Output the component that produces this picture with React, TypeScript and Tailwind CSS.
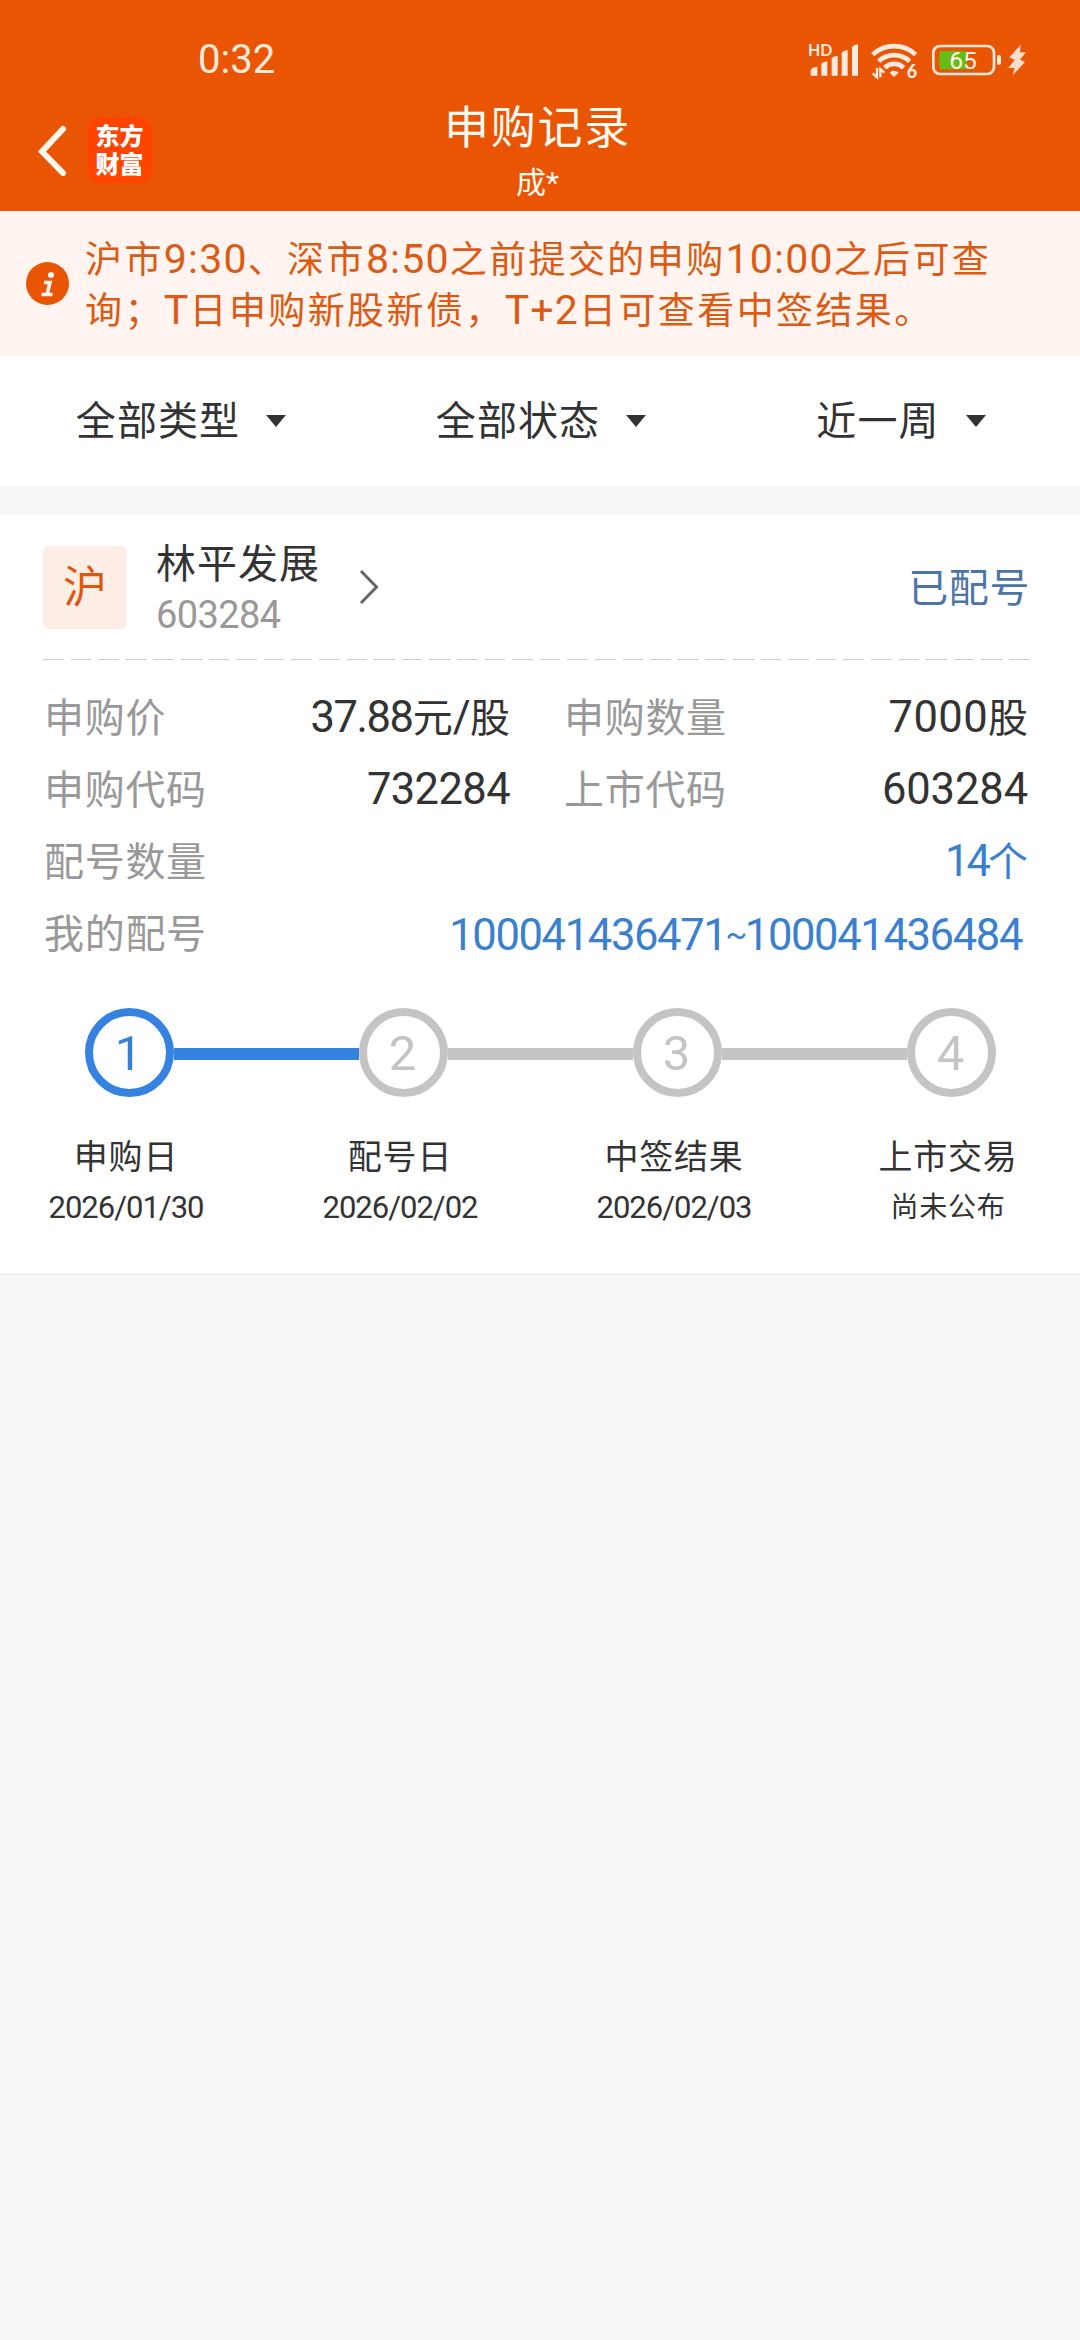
import type { ReactNode } from "react";

const cjk = "font-['Roboto','Noto_Sans_CJK_SC',sans-serif]";

function SignalIcon() {
  return (
    <svg width="52" height="36" viewBox="0 0 156 108" fill="#ffeadf" className="overflow-visible">
      <text x="0" y="42" fontFamily="Lato, sans-serif" fontWeight="700" fontSize="51" textLength="73" lengthAdjust="spacingAndGlyphs">HD</text>
      <path d="M8 84 L14 77 L28 74 V101 H8Z M40 66 L46 61 L58 58 V101 H40Z M71 49 L77 44 L89 41 V101 H71Z M101 32 L107 27 L119 24 V101 H101Z M132 15 L138 10 L150 7 V101 H132Z" />
    </svg>
  );
}

function WifiIcon() {
  return (
    <svg width="48" height="36" viewBox="0 0 144 108" fill="none" stroke="#ffeadf" strokeWidth="14" className="overflow-visible">
      <path d="M5 38 A94 94 0 0 1 134 38" />
      <path d="M23 58 A68 68 0 0 1 116 58" />
      <path d="M41 77 A42 42 0 0 1 98 77" />
      <path d="M69 105 L56 92 Q69 80 83 92Z" fill="#ffeadf" stroke="none" />
      <path d="M18 78 V106 L5 94 M28 106 V81 L40 92" strokeWidth="7" />
      <text x="107" y="109" fontFamily="Lato, sans-serif" fontWeight="900" fontSize="54" fill="#ffeadf" stroke="none">6</text>
    </svg>
  );
}

function BatteryIcon() {
  return (
    <svg width="70" height="32" viewBox="0 0 210 96">
      <rect x="4" y="6" width="182" height="84" rx="20" fill="none" stroke="#ffeadf" strokeWidth="8" />
      <rect x="22" y="21" width="83" height="55" rx="7" fill="#66bb15" />
      <rect x="195" y="33" width="12" height="30" rx="6" fill="#ffeadf" />
      <text x="93" y="75" textAnchor="middle" fontFamily="Roboto, sans-serif" fontSize="74" fill="#fff3ea">65</text>
    </svg>
  );
}

function BoltIcon() {
  return (
    <svg width="18" height="32" viewBox="0 0 54 96" fill="#ffdccb">
      <path d="M38 2 L4 40 L20 48 L1 72 H19 L15 93 L51 54 L36 47 L54 25 H36Z" />
    </svg>
  );
}

function Filter({ children }: { children: ReactNode }) {
  return (
    <button className="flex items-center justify-center gap-[26px] pl-[2px] text-[40px] leading-[48px] tracking-[1.1px] text-[#333]">
      <span className="mt-[2px]">{children}</span>
      <svg width="20" height="12" viewBox="0 0 20 12" fill="#333">
        <path d="M0 0H20L10 12Z" />
      </svg>
    </button>
  );
}

function Num({ children, className = "tracking-[-0.6px]" }: { children: ReactNode; className?: string }) {
  return <span className={`text-[43.5px] leading-none ${className}`}>{children}</span>;
}

function Row({ label, children }: { label: string; children: ReactNode }) {
  return (
    <div className="flex h-[72px] items-center justify-between text-[40px] leading-[72px] text-[#333]">
      <span className="pl-px tracking-[0.7px] text-[#999]">{label}</span>
      <span className="whitespace-nowrap">{children}</span>
    </div>
  );
}

const steps = [
  { n: 1, title: "申购日", note: "2026/01/30" },
  { n: 2, title: "配号日", note: "2026/02/02" },
  { n: 3, title: "中签结果", note: "2026/02/03" },
  { n: 4, title: "上市交易", note: "尚未公布" },
];

function B({ children }: { children: ReactNode }) {
  return <span className="text-[41px] leading-none tracking-[1.2px]">{children}</span>;
}

export default function App() {
  return (
    <div className={`min-h-[2340px] w-[1080px] overflow-hidden bg-[#f7f8fa] ${cjk}`}>
      <header className="h-[211px] bg-[#ea5504]">
        <div className="flex h-[96px] items-center justify-between pt-[23px] pr-[54px] pl-[198px]">
          <span className="text-[40px] leading-[48px] text-[#ffeadf]">0:32</span>
          <div className="flex items-center">
            <SignalIcon />
            <div className="ml-[11px]"><WifiIcon /></div>
            <div className="ml-[13px]"><BatteryIcon /></div>
            <div className="ml-[6px]"><BoltIcon /></div>
          </div>
        </div>
        <div className="grid h-[115px] grid-cols-[1fr_auto_1fr]">
          <div className="flex items-start pt-[21px] pl-[37px]">
            <svg width="31" height="52" viewBox="0 0 31 52" fill="none" stroke="#fff8f0" strokeWidth="6" strokeLinecap="round" className="mt-[7px]">
              <path d="M26 5 L5 27.5 L26 49" />
            </svg>
            <div className="ml-[19px] flex h-[66px] w-[65px] flex-col items-center justify-center rounded-[14px] bg-[#ff4400] pt-[2px] text-[24px] leading-[28px] font-black text-white">
              <span>东方</span>
              <span>财富</span>
            </div>
          </div>
          <div className="-ml-[5px] flex flex-col items-center text-[#fffaf2]">
            <h1 className="pt-[2px] text-[45px] leading-[62px] tracking-[1.8px]">申购记录</h1>
            <div className="text-[30px] leading-[46px]">成*</div>
          </div>
          <div />
        </div>
      </header>

      <div className="flex h-[145px] items-start bg-[#fff4ef] text-[#db5a14]">
        <div className="mt-[51px] ml-[26px] flex h-[43px] w-[43px] items-center justify-center rounded-full bg-[#ea5504]">
          <svg width="14" height="26" viewBox="0 0 14 26" fill="none" stroke="#fff4ef" strokeWidth="3.6">
            <circle cx="10" cy="4" r="3" fill="#fff4ef" stroke="none" />
            <path d="M3 11.5 H9 L6 23.5 M0.5 23.5 H11.5" />
          </svg>
        </div>
        <p className="mt-[24px] ml-[16px] text-[37px] leading-[51px] tracking-[2.4px] whitespace-nowrap">
          沪市<B>9:30</B>、深市<B>8:50</B>之前提交的申购<B>10:00</B>之后可查
          <br />
          询；<B>T</B>日申购新股新债，<B>T+2</B>日可查看中签结果。
        </p>
      </div>

      <div className="grid h-[130px] grid-cols-3 bg-white">
        <Filter>全部类型</Filter>
        <Filter>全部状态</Filter>
        <Filter>近一周</Filter>
      </div>

      <section className="mt-[29px] h-[760px] border-b border-[#e9eaec] bg-white px-[43px] pt-[30px]">
        <div className="flex h-[84px] items-center pr-[7px]">
          <div className="flex h-[83px] w-[84px] items-center justify-center rounded-[6px] bg-[#fdeee5] pt-[1px] text-[44px] leading-[60px] text-[#dc5712]">沪</div>
          <div className="ml-[29px] flex flex-col pt-[5px]">
            <span className="text-[40px] leading-[46px] tracking-[1px] text-[#333]">林平发展</span>
            <span className="mt-[4px] text-[38px] leading-[46px] tracking-[-0.6px] text-[#999]">603284</span>
          </div>
          <svg width="20" height="36" viewBox="0 0 20 36" fill="none" stroke="#666" strokeWidth="3" className="ml-[39px]">
            <path d="M2 2 L17.5 18 L2 34" />
          </svg>
          <span className="mt-[3px] ml-auto text-[40px] leading-[48px] tracking-[0.6px] text-[#4d74a6]">已配号</span>
        </div>
        <div className="mt-[30px] h-px w-[987px] bg-[repeating-linear-gradient(90deg,#cccccc_0,#cccccc_20.6px,transparent_20.6px,transparent_27.6px)]" />
        <div className="mt-[23px] pr-[9px]">
          <div className="grid grid-cols-[467px_465px] justify-between">
            <Row label="申购价"><Num className="tracking-[-1.4px]">37.88</Num>元<Num>/</Num>股</Row>
            <Row label="申购数量"><Num className="tracking-[0.4px]">7000</Num>股</Row>
            <Row label="申购代码"><Num>732284</Num></Row>
            <Row label="上市代码"><Num className="tracking-[-0.1px]">603284</Num></Row>
          </div>
          <Row label="配号数量"><span className="text-[#3b7fcf]"><Num className="tracking-[-3px]">14</Num>个</span></Row>
          <Row label="我的配号">
            <span className="mr-[6px] inline-block pt-[3px] text-[43.5px] leading-[69px] tracking-[-1.35px] text-[#3b7fcf]">
              100041436471<span className="-mx-[1px] align-[5px] text-[32px] leading-none">~</span>100041436484
            </span>
          </Row>
        </div>

        <div className="mt-[37px] flex items-center pl-[42px]">
          {steps.map((s, i) => (
            <div key={s.n} className="flex items-center">
              {i > 0 && <div className={`mt-[3px] h-[12px] w-[185px] ${i === 1 ? "bg-[#3682e0]" : "bg-[#c4c4c4]"}`} />}
              <div className={`flex h-[89px] w-[89px] items-center justify-center rounded-full border-[8.5px] pt-[3px] pr-[2px] text-[49px] leading-[60px] ${i === 0 ? "border-[#3682e0] text-[#3b7fcf]" : "border-[#c4c4c4] text-[#c4c4c4]"}`}>{s.n}</div>
            </div>
          ))}
        </div>
        <div className="mt-[35px] -ml-[54px] grid w-[1096px] grid-cols-4 text-center text-[#333]">
          {steps.map((s) => (
            <div key={s.n}>
              <div className="text-[34px] leading-[50px] tracking-[0.8px]">{s.title}</div>
              <div className={s.n === 4 ? "text-[28px] leading-[51px] tracking-[0.8px]" : "text-[31px] leading-[51px] tracking-[-1px]"}>{s.note}</div>
            </div>
          ))}
        </div>
      </section>
    </div>
  );
}
